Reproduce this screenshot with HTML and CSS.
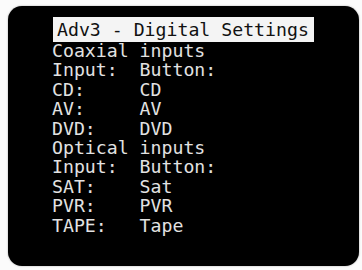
FILE: index.html
```html
<!DOCTYPE html>
<html>
<head>
<meta charset="utf-8">
<link rel="stylesheet" href="styles.css">
</head>
<body>
<div class="screen">
<div class="title-row"><span class="title">Adv3 - Digital Settings</span></div>
<div class="lines">Coaxial inputs
Input:  Button:
CD:     CD
AV:     AV
DVD:    DVD
Optical inputs
Input:  Button:
SAT:    Sat
PVR:    PVR
TAPE:   Tape</div>
</div>
</body>
</html>
```
FILE: styles.css
```css
html, body {
  margin: 0;
  padding: 0;
  background: #fbfbfb;
}
body {
  width: 362px;
  height: 270px;
  overflow: hidden;
}
.screen {
  margin: 6px 0 0 8px;
  width: 351px;
  height: 260px;
  box-sizing: border-box;
  background: #000;
  border-radius: 14px;
  padding: 11px 0 0 44px;
  font-family: "DejaVu Sans Mono", "Liberation Mono", monospace;
  font-size: 18.2px;
  color: #e2e2e2;
  box-shadow: 0 0 2px rgba(0,0,0,0.35);
}
.title-row {
  height: 25px;
}
.title {
  display: inline-block;
  background: #f4f4f4;
  color: #111;
  line-height: 22px;
  padding: 2px 5px 1px 4px;
  margin-left: 1px;
}
.lines {
  white-space: pre;
  line-height: 19.4px;
  margin-top: -1px;
}
```
